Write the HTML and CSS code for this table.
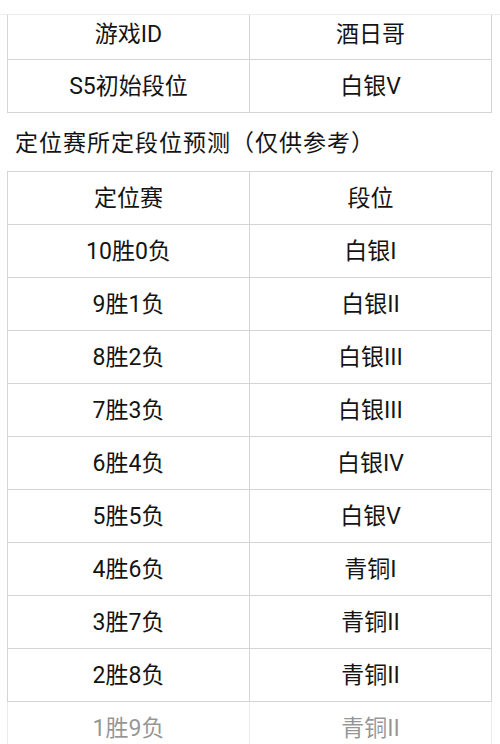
FILE: index.html
```html
<!DOCTYPE html>
<html lang="zh">
<head>
<meta charset="utf-8">
<link rel="stylesheet" href="styles.css">
</head>
<body>
<div class="page">
  <div class="strip"></div>
  <div class="tbl first">
    <div class="cell r1">游戏ID</div><div class="cell r1">酒日哥</div>
    <div class="cell">S5初始段位</div><div class="cell">白银V</div>
  </div>
  <div class="heading">定位赛所定段位预测（仅供参考）</div>
  <div class="tbl second">
    <div class="cell">定位赛</div><div class="cell">段位</div>
    <div class="cell">10胜0负</div><div class="cell">白银I</div>
    <div class="cell">9胜1负</div><div class="cell">白银II</div>
    <div class="cell">8胜2负</div><div class="cell">白银III</div>
    <div class="cell">7胜3负</div><div class="cell">白银III</div>
    <div class="cell">6胜4负</div><div class="cell">白银IV</div>
    <div class="cell">5胜5负</div><div class="cell">白银V</div>
    <div class="cell">4胜6负</div><div class="cell">青铜I</div>
    <div class="cell">3胜7负</div><div class="cell">青铜II</div>
    <div class="cell">2胜8负</div><div class="cell">青铜II</div>
    <div class="cell">1胜9负</div><div class="cell">青铜II</div>
  </div>
  <div class="fade"></div>
</div>
</body>
</html>
```
FILE: styles.css
```css
html, body {
  margin: 0;
  padding: 0;
  background: #fff;
  overflow: hidden;
  height: 744px;
}
.page {
  position: relative;
  width: 500px;
  height: 744px;
  overflow: hidden;
  font-family: Roboto, "Noto Sans CJK SC", sans-serif;
  color: #141414;
  font-size: 23px;
}
.strip {
  height: 14px;
  border-bottom: 1px solid #ececec;
}
.tbl {
  display: grid;
  grid-template-columns: 242px 242px;
  margin-left: 7px;
  width: 485px;
  border-left: 1px solid #d4d4d4;
}
.tbl.second {
  border-top: 1px solid #d4d4d4;
}
.cell {
  box-sizing: border-box;
  height: 53px;
  padding-bottom: 4px;
  display: flex;
  align-items: center;
  justify-content: center;
  border-right: 1px solid #d4d4d4;
  border-bottom: 1px solid #d4d4d4;
}
.cell.r1 {
  height: 45px;
  padding-bottom: 11px;
}
.heading {
  box-sizing: border-box;
  height: 58px;
  padding-left: 15px;
  padding-bottom: 3px;
  display: flex;
  align-items: center;
  letter-spacing: 1px;
}
.fade {
  position: absolute;
  left: 0;
  right: 0;
  top: 702px;
  bottom: 0;
  background: rgba(255, 255, 255, 0.55);
}
```
